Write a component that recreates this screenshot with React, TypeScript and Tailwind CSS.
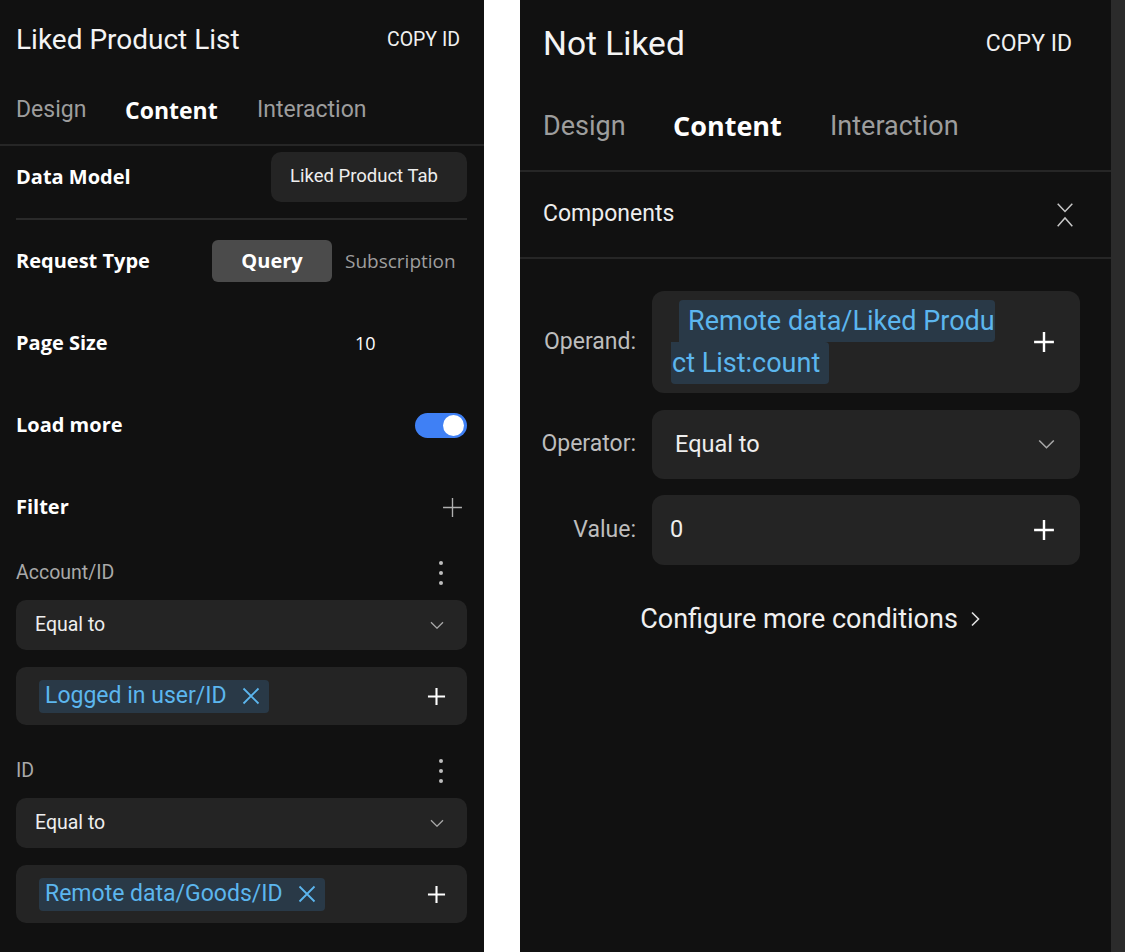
import React from "react";

const roboto = { fontFamily: "Roboto, 'Noto Sans', sans-serif" };
const segoe = { fontFamily: "'Open Sans', 'Noto Sans', sans-serif" };

function Plus({ size = 20, stroke = 2.2, color = "#ffffff" }: { size?: number; stroke?: number; color?: string }) {
  return (
    <svg width={size} height={size} viewBox="0 0 20 20" fill="none">
      <path d="M10 1v18M1 10h18" stroke={color} strokeWidth={stroke} />
    </svg>
  );
}

function Chevron({ size = 14 }: { size?: number }) {
  return (
    <svg width={size} height={size * 0.6} viewBox="0 0 14 8" fill="none">
      <path d="M1 1l6 6 6-6" stroke="#a8a8a8" strokeWidth={1.3} />
    </svg>
  );
}

function Kebab() {
  return (
    <div className="flex flex-col items-center gap-[6px]">
      <span className="w-[4px] h-[4px] rounded-full bg-[#bdbdbd]" />
      <span className="w-[4px] h-[4px] rounded-full bg-[#bdbdbd]" />
      <span className="w-[4px] h-[4px] rounded-full bg-[#bdbdbd]" />
    </div>
  );
}

function Chip({ label }: { label: string }) {
  return (
    <span className="inline-flex items-center h-[33px] pl-[6px] pr-[9px] rounded-[4px] bg-[#293947] text-[#5cb6ee] text-[23px] gap-[15px]">
      {label}
      <svg width="18" height="18" viewBox="0 0 18 18" fill="none">
        <path d="M1.5 1.5l15 15M16.5 1.5l-15 15" stroke="#5cb6ee" strokeWidth={1.8} />
      </svg>
    </span>
  );
}

function FilterItem({ field, chip }: { field: string; chip: string }) {
  return (
    <div className="flex flex-col">
      <div className="h-[50px] flex items-center justify-between pr-[24px]">
        <span className="text-[19.5px] text-[#a9a9a9]">{field}</span>
        <Kebab />
      </div>
      <div className="mt-[2px] h-[50px] rounded-[10px] bg-[#242424] flex items-center justify-between pl-[19px] pr-[23px]">
        <span className="text-[19.5px] text-[#eeeeee]">Equal to</span>
        <Chevron />
      </div>
      <div className="mt-[17px] h-[58px] rounded-[10px] bg-[#242424] flex items-center justify-between pl-[23px] pr-[21px]">
        <Chip label={chip} />
        <Plus size={19} />
      </div>
    </div>
  );
}

function LeftPanel() {
  return (
    <div className="w-[484px] shrink-0 h-full bg-[#111111] text-white flex flex-col" style={roboto}>
      <div className="h-[80px] flex items-center justify-between pl-[16px] pr-[24px]">
        <span className="text-[28px] text-[#f4f4f4]">Liked Product List</span>
        <span className="text-[19.5px] text-[#f0f0f0]">COPY ID</span>
      </div>
      <div className="h-[66px] pb-[4px] flex items-center pl-[16px] border-b-2 border-[#262626] text-[23px]">
        <span className="text-[#9d9d9d] w-[109px]">Design</span>
        <span className="font-bold text-white w-[132px]" style={segoe}>Content</span>
        <span className="text-[#9d9d9d]">Interaction</span>
      </div>
      <div className="pl-[16px] pr-[17px] flex flex-col">
        <div className="pt-[6px] pb-[16px] border-b-2 border-[#2a2a2a] flex items-center justify-between">
          <span className="text-[20px] font-bold" style={segoe}>Data Model</span>
          <div className="w-[196px] h-[50px] rounded-[10px] bg-[#242424] flex items-center pl-[19px]">
            <span className="whitespace-nowrap text-[18.5px] text-[#eeeeee]">Liked Product Tab</span>
          </div>
        </div>
        <div className="h-[82px] flex items-center" style={segoe}>
          <span className="text-[20px] font-bold w-[196px]">Request Type</span>
          <div className="w-[120px] h-[42px] rounded-[6px] bg-[#4b4b4b] flex items-center justify-center text-[20px] font-bold">Query</div>
          <span className="ml-[13px] text-[19px] text-[#9e9e9e]">Subscription</span>
        </div>
        <div className="h-[82px] flex items-center" style={segoe}>
          <span className="text-[20px] font-bold w-[339px]">Page Size</span>
          <span className="text-[18px]">10</span>
        </div>
        <div className="h-[82px] flex items-center justify-between" style={segoe}>
          <span className="text-[20px] font-bold">Load more</span>
          <div className="w-[52px] h-[25px] rounded-full bg-[#3f80f5] flex items-center justify-end pr-[3px]">
            <span className="w-[21px] h-[21px] rounded-full bg-white" />
          </div>
        </div>
        <div className="h-[82px] flex items-center justify-between pr-[4px]" style={segoe}>
          <span className="text-[20px] font-bold">Filter</span>
          <Plus size={21} stroke={1.3} color="#b0b0b0" />
        </div>
        <FilterItem field="Account/ID" chip="Logged in user/ID" />
        <div className="h-[21px]" />
        <FilterItem field="ID" chip="Remote data/Goods/ID" />
      </div>
    </div>
  );
}

function RightRow({ label, children, h }: { label: string; children: React.ReactNode; h: string }) {
  return (
    <div className="flex items-center gap-[16px]">
      <span className="w-[100px] text-right text-[23px] text-[#bdbdbd]">{label}</span>
      <div className={`flex-1 ${h} rounded-[12px] bg-[#242424] flex items-center justify-between pr-[25px]`}>{children}</div>
    </div>
  );
}

function RightPanel() {
  return (
    <div className="w-[591px] shrink-0 h-full bg-[#111111] text-white flex flex-col" style={roboto}>
      <div className="h-[88px] flex items-center justify-between pl-[23px] pr-[39px]">
        <span className="text-[33.5px] text-[#f4f4f4]">Not Liked</span>
        <span className="text-[23px] text-[#f0f0f0]">COPY ID</span>
      </div>
      <div className="h-[84px] pb-[5px] flex items-center pl-[23px] border-b-2 border-[#262626] text-[27px]">
        <span className="text-[#9d9d9d] w-[130px]">Design</span>
        <span className="font-bold text-white w-[157px]" style={segoe}>Content</span>
        <span className="text-[#9d9d9d]">Interaction</span>
      </div>
      <div className="h-[87px] flex items-center justify-between pl-[23px] pr-[38px] border-b-2 border-[#262626]">
        <span className="text-[23px] text-[#eeeeee]">Components</span>
        <svg width="16" height="24" viewBox="0 0 16 24" fill="none">
          <path d="M0.7 0.7L8 8.5l7.3-7.8M0.7 23.3L8 15l7.3 8.3" stroke="#c8c8c8" strokeWidth={1.5} />
        </svg>
      </div>
      <div className="pt-[32px] pl-[16px] pr-[31px] flex flex-col">
        <RightRow label="Operand:" h="h-[102px]">
          <div className="pl-[19px] flex flex-col text-[27px] leading-[42px] text-[#5cb6ee]">
            <span className="self-start ml-[8px] pl-[9px] rounded-t-[4px] rounded-br-[4px] bg-[#293947]">Remote data/Liked Produ</span>
            <span className="self-start pl-[1px] pr-[9px] rounded-b-[4px] rounded-r-[4px] bg-[#293947]">ct List:count</span>
          </div>
          <Plus size={22} />
        </RightRow>
        <div className="h-[17px]" />
        <RightRow label="Operator:" h="h-[69px]">
          <span className="pl-[23px] text-[23.5px] text-[#eeeeee]">Equal to</span>
          <Chevron size={17} />
        </RightRow>
        <div className="h-[16px]" />
        <RightRow label="Value:" h="h-[70px]">
          <span className="pl-[18px] text-[23.5px] text-[#eeeeee]">0</span>
          <Plus size={22} />
        </RightRow>
        <div className="mt-[34px] h-[40px] flex items-center justify-center gap-[12px] pl-[4px] text-[27px] text-[#f0f0f0]">
          <span>Configure more conditions</span>
          <svg width="10" height="16" viewBox="0 0 10 16" fill="none">
            <path d="M2 1.5l6.5 6.5L2 14.5" stroke="#e0e0e0" strokeWidth={1.6} />
          </svg>
        </div>
      </div>
    </div>
  );
}

export default function App() {
  return (
    <div className="w-[1125px] h-[952px] bg-white flex overflow-hidden">
      <LeftPanel />
      <div className="w-[36px] shrink-0 bg-white" />
      <RightPanel />
      <div className="w-[14px] shrink-0 bg-[#2b2b2b]" />
    </div>
  );
}
